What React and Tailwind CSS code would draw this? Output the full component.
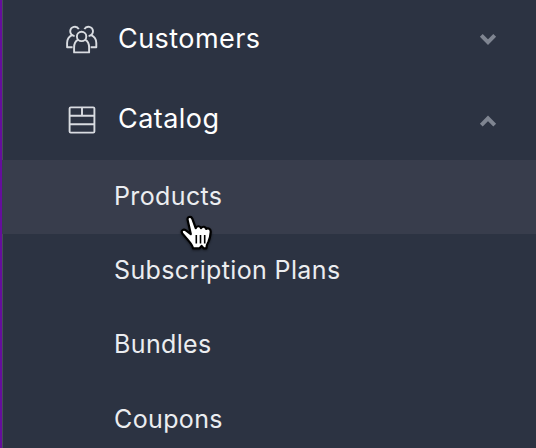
const CustomersIcon = () => (
  <svg className="h-8 w-8 shrink-0" viewBox="0 0 32 32" fill="none" stroke="#d9dce1" strokeWidth="1.9" strokeLinejoin="round" aria-hidden="true">
    <path d="M8.6 12.1C6.3 11.6 4.2 9.7 4.2 7A4.6 4.6 0 0 1 12.8 5.1M6 11.2C3.1 12.6 1.1 15.3 1.1 19V23.2H6.6" />
    <path d="M22.6 12.1C24.9 11.6 27 9.7 27 7A4.6 4.6 0 0 0 18.4 5.1M25.2 11.2C28.1 12.6 30.3 15.3 30.3 19V23.2H24.6" />
    <circle cx="15.6" cy="12.4" r="4.7" />
    <path d="M11.9 15.9C9.2 17.3 8.1 20 8.1 23.4V28.4H23.1V23.4C23.1 20 22 17.3 19.3 15.9" />
  </svg>
);

const CatalogIcon = () => (
  <svg className="h-8 w-8 shrink-0" viewBox="0 0 32 32" fill="none" stroke="#d9dce1" strokeWidth="1.9" aria-hidden="true">
    <rect x="3.6" y="3.4" width="24.8" height="25.2" rx="1.2" />
    <path d="M3.6 11.8H28.4M3.6 20.2H28.4M16 3.4V11.8" />
  </svg>
);

const Chevron = ({ open = false }) => (
  <svg className={`h-5 w-5 shrink-0 ${open ? 'translate-y-[1.5px] rotate-180' : '-translate-y-[1px]'}`} viewBox="0 0 20 20" fill="none" stroke="#7f8591" strokeWidth="4" aria-hidden="true">
    <path d="M3.3 6.4L10 13.1L16.7 6.4" />
  </svg>
);

const HandCursor = () => (
  <svg className="absolute left-[176px] top-[52px] z-10 h-[42px] w-[38px] drop-shadow-[0_1px_1px_rgba(0,0,0,0.45)]" viewBox="0 0 38 42" aria-hidden="true">
    <path
      d="M9.7 8.2C8.7 4.8 13 3.7 14.3 6.7L17.7 16.2C18.9 13.5 22.2 13.7 23 16.2C24.6 14 27.8 14.4 28.3 17C30.4 15.4 33 17.3 32.7 20.2C32.4 24 32 27 30.3 30C29 32.1 28.4 33.8 28.4 36.4H25.8L23.6 33.9L21.4 36.4H15C14.6 32.9 11.8 30.5 9.2 27.1L4.3 21.5C2.6 18.8 5.3 16.5 7.9 18.3L12.8 22Z"
      fill="white" stroke="black" strokeWidth="2.2" strokeLinejoin="round"
    />
    <path d="M18.3 23V31.5M22.5 23V31.5M26.7 23V31.5" stroke="black" strokeWidth="1.6" fill="none" />
  </svg>
);

const MenuItem = ({ icon, label, open }) => (
  <div className="flex h-20 items-center pl-16 pr-[38px] text-white">
    {icon}
    <span className="ml-5 flex-1 -translate-y-[1px] text-[27px] leading-8 tracking-[0.45px]">{label}</span>
    <Chevron open={open} />
  </div>
);

const SubItem = ({ label, active = false, children }) => (
  <li className={`relative h-[74.2px] pl-[112px] pt-5 text-[25px] leading-8 tracking-[0.37px] text-[#ebedf0] ${active ? 'bg-[#383d4c]' : ''}`}>
    {label}
    {children}
  </li>
);

export default function App() {
  return (
    <nav className="h-[448px] w-[536px] overflow-hidden border-l-2 border-[#650e9c] bg-[#2c3342] font-['Inter',sans-serif]">
      <div className="h-full border-l border-[#484d55]">
        <div className="-ml-px">
          <MenuItem icon={<CustomersIcon />} label="Customers" />
          <MenuItem icon={<CatalogIcon />} label="Catalog" open />
          <ul>
            <SubItem label="Products" active>
              <HandCursor />
            </SubItem>
            <SubItem label="Subscription Plans" />
            <SubItem label="Bundles" />
            <SubItem label="Coupons" />
          </ul>
        </div>
      </div>
    </nav>
  );
}
